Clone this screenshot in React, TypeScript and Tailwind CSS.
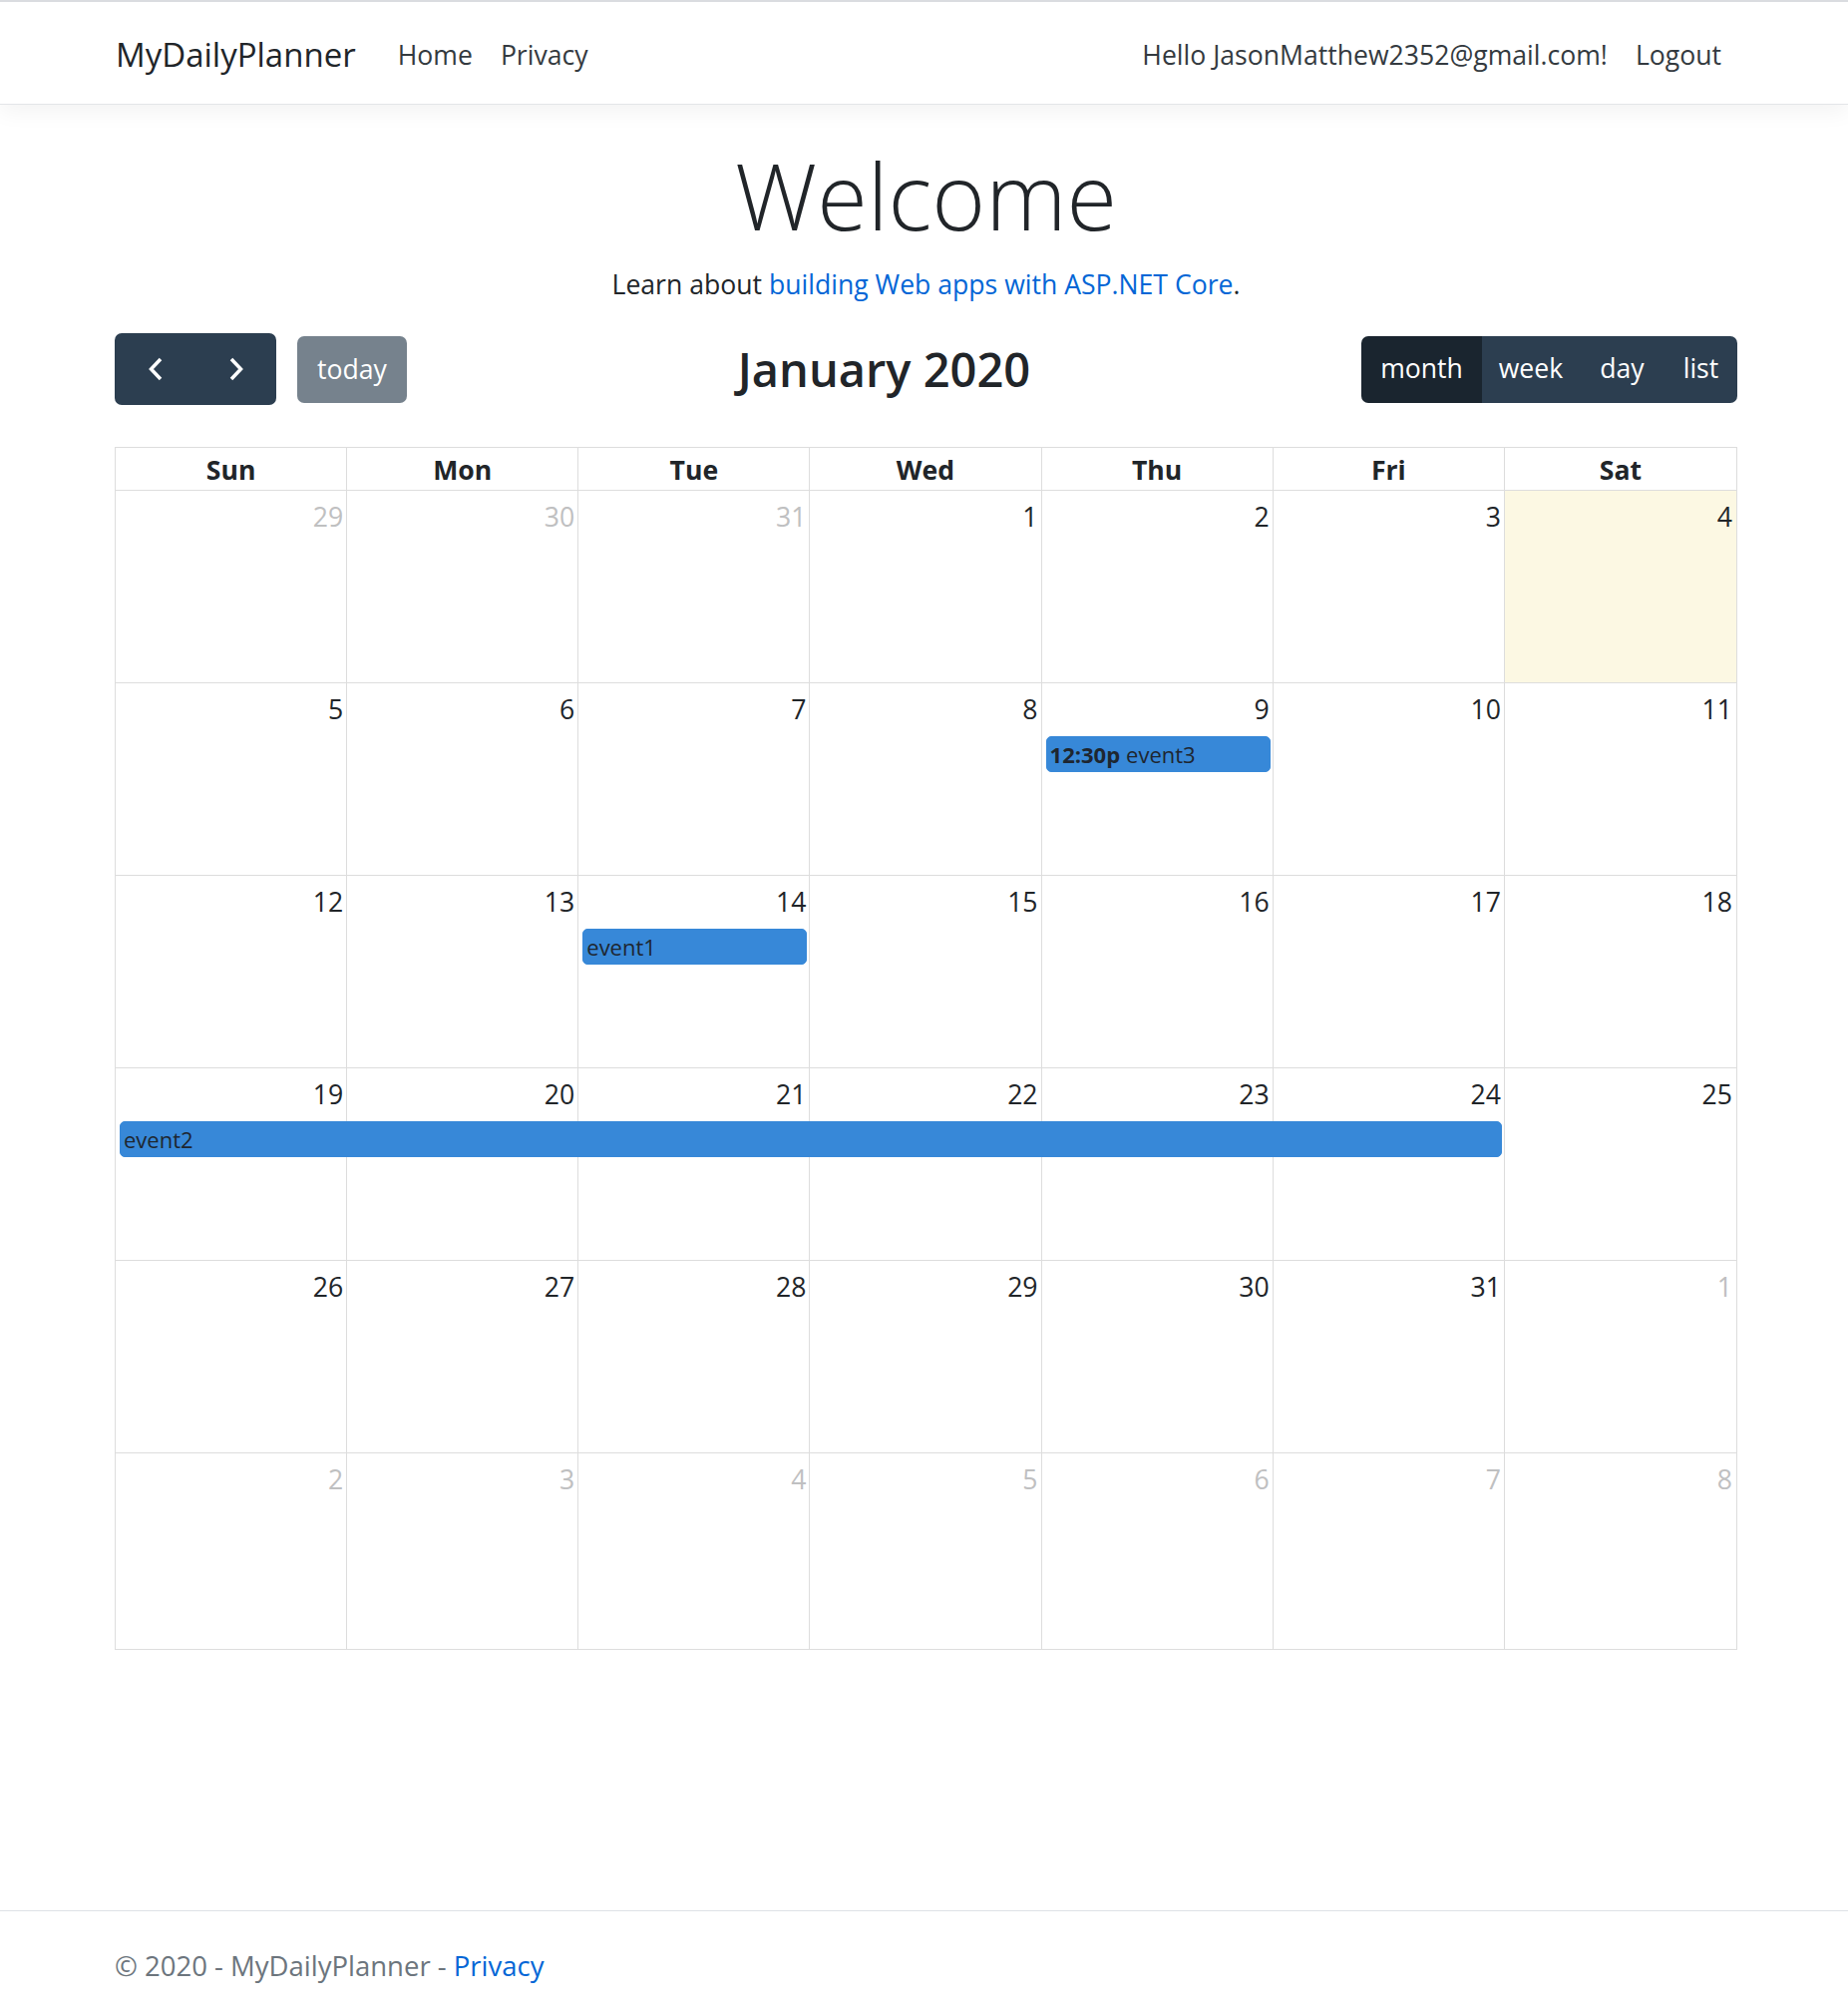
const colStart = ["col-start-1", "col-start-2", "col-start-3", "col-start-4", "col-start-5", "col-start-6", "col-start-7"];
const colSpan = ["", "col-span-1", "col-span-2", "col-span-3", "col-span-4", "col-span-5", "col-span-6"];

type Day = { n: number; other?: boolean; today?: boolean };
type Ev = { col: number; span: number; time?: string; title: string };

const weeks: { days: Day[]; events: Ev[] }[] = [
  {
    days: [{ n: 29, other: true }, { n: 30, other: true }, { n: 31, other: true }, { n: 1 }, { n: 2 }, { n: 3 }, { n: 4, today: true }],
    events: [],
  },
  {
    days: [5, 6, 7, 8, 9, 10, 11].map((n) => ({ n })),
    events: [{ col: 4, span: 1, time: "12:30p", title: "event3" }],
  },
  {
    days: [12, 13, 14, 15, 16, 17, 18].map((n) => ({ n })),
    events: [{ col: 2, span: 1, title: "event1" }],
  },
  {
    days: [19, 20, 21, 22, 23, 24, 25].map((n) => ({ n })),
    events: [{ col: 0, span: 6, title: "event2" }],
  },
  {
    days: [{ n: 26 }, { n: 27 }, { n: 28 }, { n: 29 }, { n: 30 }, { n: 31 }, { n: 1, other: true }],
    events: [],
  },
  {
    days: [2, 3, 4, 5, 6, 7, 8].map((n) => ({ n, other: true })),
    events: [],
  },
];

const dayNames = ["Sun", "Mon", "Tue", "Wed", "Thu", "Fri", "Sat"];

function Chevron({ dir }: { dir: "left" | "right" }) {
  return (
    <svg width="14" height="24" viewBox="0 0 14 24" fill="none">
      <path
        d={dir === "left" ? "M12 2 L2.5 12 L12 22" : "M2 2 L11.5 12 L2 22"}
        stroke="white"
        strokeWidth="3.5"
      />
    </svg>
  );
}

export default function App() {
  return (
    <div
      className="min-h-screen flex flex-col bg-white text-[#212529] text-[26.6px]"
      style={{ fontFamily: '"Segoe UI", "Open Sans", "Noto Sans", sans-serif' }}
    >
      {/* Navbar */}
      <header className="border-t-2 border-[#dadce0] bg-white border-b border-b-[#e3e5e8] shadow-[0_7px_21px_rgba(0,0,0,0.05)]">
        <nav className="max-w-[1627px] mx-auto h-[102px] pt-[3px] flex items-center">
          <span className="text-[33px] text-[#212529] pl-[3px] mr-[28px] leading-[50px]">MyDailyPlanner</span>
          <a className="px-[14px] text-[#343a40] leading-[42px]">Home</a>
          <a className="px-[14px] text-[#343a40] leading-[42px]">Privacy</a>
          <div className="ml-auto flex items-center">
            <span className="px-[14px] text-[#343a40] leading-[42px]">Hello JasonMatthew2352@gmail.com!</span>
            <a className="px-[14px] text-[#343a40] leading-[42px]">Logout</a>
          </div>
        </nav>
      </header>

      {/* Main */}
      <main className="max-w-[1631px] w-full mx-auto pl-[4px] pt-[32px]">
        <div className="text-center">
          <h1 className="text-[92px] font-light leading-[118px] mb-[9px]">Welcome</h1>
          <p className="leading-[42px] mb-[28px]">
            Learn about <a className="text-[#0366d6]">building Web apps with ASP.NET Core</a>.
          </p>
        </div>

        {/* Calendar toolbar */}
        <div className="flex items-center justify-between mb-[42px]">
          <div className="flex items-center">
            <div className="flex h-[72px] rounded-[7px] bg-[#2c3e50] overflow-hidden">
              <button className="w-[81px] flex items-center justify-center">
                <Chevron dir="left" />
              </button>
              <button className="w-[81px] flex items-center justify-center">
                <Chevron dir="right" />
              </button>
            </div>
            <button className="ml-[21px] w-[110px] h-[67px] rounded-[7px] bg-[#76828d] text-white leading-[42px]">
              today
            </button>
          </div>
          <h2 className="text-[47px] font-semibold leading-[60px]">January 2020</h2>
          <div className="flex h-[67px] rounded-[7px] overflow-hidden text-white">
            <button className="w-[121px] bg-[#1a252f]">month</button>
            <button className="w-[98px] bg-[#2c3e50]">week</button>
            <button className="w-[85px] bg-[#2c3e50]">day</button>
            <button className="w-[73px] bg-[#2c3e50]">list</button>
          </div>
        </div>

        {/* Month grid */}
        <div className="border border-[#ddd]">
          <div className="grid grid-cols-7 h-[43px] border-b border-[#ddd]">
            {dayNames.map((d, i) => (
              <div
                key={d}
                className={`font-bold text-center leading-[44px] ${i < 6 ? "border-r border-[#ddd]" : ""}`}
              >
                {d}
              </div>
            ))}
          </div>
          {weeks.map((w, wi) => (
            <div
              key={wi}
              className={`grid grid-cols-7 grid-rows-[48px_auto_1fr] ${
                wi < 5 ? "h-[193px] border-b border-[#ddd]" : "h-[196px]"
              }`}
            >
              {w.days.map((d, i) => (
                <div
                  key={"bg" + i}
                  className={`${colStart[i]} row-start-1 row-end-4 ${i < 6 ? "border-r border-[#ddd]" : ""} ${
                    d.today ? "bg-[#fcf8e3]" : ""
                  }`}
                />
              ))}
              {w.days.map((d, i) => (
                <div
                  key={"n" + i}
                  className={`${colStart[i]} row-start-1 text-right pr-[4px] pt-[5px] leading-[42px] ${
                    d.other ? "text-[#bfc0c1]" : "text-[#212529]"
                  }`}
                >
                  {d.n}
                </div>
              ))}
              {w.events.map((e, ei) => (
                <div
                  key={"e" + ei}
                  className={`${colStart[e.col]} ${colSpan[e.span]} row-start-2 mt-[5px] ml-[4px] mr-[3px] h-[36px] rounded-[5px] bg-[#3788d8] border border-[#3788d8] px-[3px] flex items-center text-[22px] text-[#1e2630] whitespace-nowrap`}
                >
                  {e.time && <span className="font-bold mr-[6px]">{e.time}</span>}
                  <span>{e.title}</span>
                </div>
              ))}
            </div>
          ))}
        </div>
      </main>

      {/* Footer */}
      <footer className="mt-auto border-t border-[#dee2e6] h-[106px]">
        <div className="max-w-[1627px] mx-auto leading-[105px] text-[27.5px] text-[#6c757d] pl-[2px] pt-[2px] whitespace-nowrap">
          © 2020 - MyDailyPlanner - <a className="text-[#0366d6]">Privacy</a>
        </div>
      </footer>
    </div>
  );
}
